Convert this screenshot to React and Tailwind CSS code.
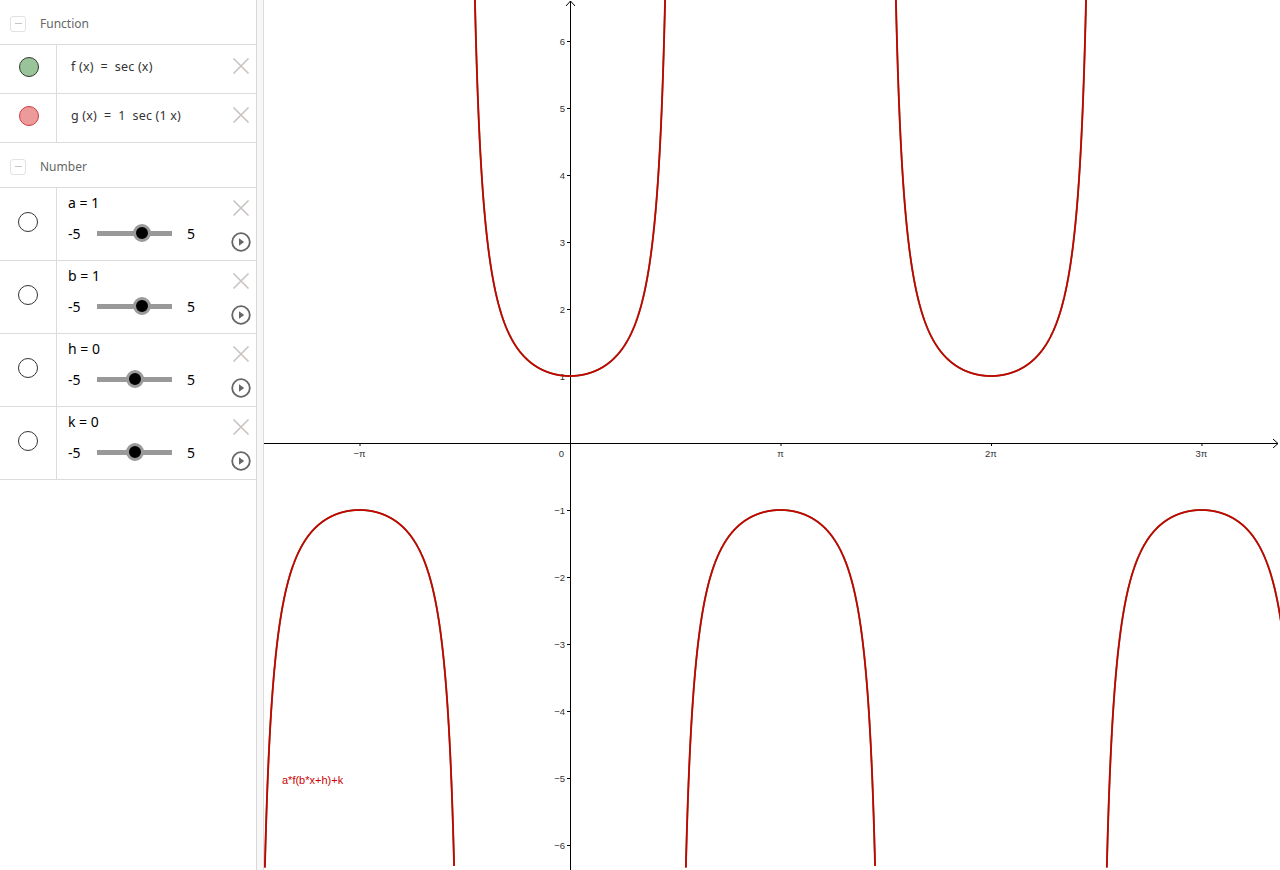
import React from 'react';

// GeoGebra-like view: algebra panel on the left, graphics view on the right.

const GRAPH_W = 1016;
const GRAPH_H = 870;
const OX = 306; // origin x inside graph
const OY = 443; // origin y inside graph
const S = 67; // px per unit

const sliders = [
  { name: 'a', value: 1 },
  { name: 'b', value: 1 },
  { name: 'h', value: 0 },
  { name: 'k', value: 0 },
];

function CollapseIcon() {
  return (
    <div className="w-[16px] h-[16px] rounded-[3px] border border-[#e2e2e2] flex items-center justify-center">
      <div className="w-[7px] h-[1.5px] bg-[#c4c4c4]" />
    </div>
  );
}

function CloseIcon() {
  return (
    <svg width="18" height="16" viewBox="0 0 18 16" aria-hidden="true">
      <path d="M1.5 0.5 L16.5 15.5 M16.5 0.5 L1.5 15.5" stroke="#c9c4bf" strokeWidth="1.6" fill="none" />
    </svg>
  );
}

function PlayIcon() {
  return (
    <svg width="20" height="20" viewBox="0 0 20 20" aria-hidden="true">
      <circle cx="10" cy="10" r="8.8" stroke="#666" strokeWidth="1.8" fill="none" />
      <path d="M8 6.3 L13.2 10 L8 13.7 Z" fill="#666" />
    </svg>
  );
}

function SectionHeader({ title }) {
  return (
    <div className="h-[45px] border-b border-[#dcdcdc] flex items-center pl-[10px] pt-[3px] gap-[14px]">
      <CollapseIcon />
      <span className="text-[12px] text-[#666]">{title}</span>
    </div>
  );
}

function FunctionRow({ fill, stroke, children }) {
  return (
    <div className="h-[49px] border-b border-[#dcdcdc] flex">
      <div className="w-[57px] border-r border-[#dcdcdc] flex items-center justify-center pl-[1px] pb-[4px]">
        <div className="w-[20px] h-[20px] rounded-full border" style={{ backgroundColor: fill, borderColor: stroke }} />
      </div>
      <div className="flex-1 flex items-center pl-[14px] pb-[3px] text-[12.5px] text-[#333] whitespace-pre tracking-[0.2px]">
        {children}
      </div>
      <div className="pt-[13px] pr-[6px]">
        <CloseIcon />
      </div>
    </div>
  );
}

function SliderRow({ name, value }) {
  const pos = ((value + 5) / 10) * 75;
  return (
    <div className="h-[73px] border-b border-[#dcdcdc] flex">
      <div className="w-[57px] border-r border-[#dcdcdc] flex items-center justify-center pb-[4px]">
        <div className="w-[20px] h-[20px] rounded-full border border-[#333] bg-white" />
      </div>
      <div className="flex-1 flex flex-col pl-[11px] pt-[5px] text-[14px] text-black">
        <span className="leading-[20px]">{name} = {value}</span>
        <div className="flex items-center h-[20px] mt-[10px]">
          <span className="w-[29px]">-5</span>
          <div className="relative w-[75px] h-[5px] bg-[#999]">
            <div
              className="absolute top-1/2 w-[18px] h-[18px] -ml-[9px] -mt-[9px] rounded-full bg-black border-[3px] border-[#9a9a9a]"
              style={{ left: pos }}
            />
          </div>
          <span className="ml-[15px]">5</span>
        </div>
      </div>
      <div className="flex flex-col items-center pr-[5px] pt-[12px] gap-[16px]">
        <CloseIcon />
        <PlayIcon />
      </div>
    </div>
  );
}

function buildBranches() {
  const paths = [];
  for (let k = -2; k <= 4; k++) {
    const c = k * Math.PI;
    let d = '';
    for (let x = c - Math.PI / 2 + 0.0005; x < c + Math.PI / 2; x += 0.002) {
      const y = 1 / Math.cos(x);
      const px = OX + x * S;
      const py = OY - y * S;
      if (px < -2 || px > GRAPH_W + 2) continue;
      if (py < -20 || py > GRAPH_H - 2) continue;
      d += (d ? ' L' : 'M') + px.toFixed(2) + ' ' + py.toFixed(2);
    }
    if (d) paths.push(d);
  }
  return paths;
}

const branches = buildBranches();

function Graph() {
  const yTicks = [6, 5, 4, 3, 2, 1, -1, -2, -3, -4, -5, -6];
  const xTicks = [
    { v: -1, label: '−π' },
    { v: 1, label: 'π' },
    { v: 2, label: '2π' },
    { v: 3, label: '3π' },
  ];
  return (
    <svg width={GRAPH_W} height={GRAPH_H} className="block" style={{ fontFamily: '"Liberation Sans", Arial, sans-serif' }}>
      {/* axes */}
      <line x1="0" y1={OY + 0.5} x2={GRAPH_W - 2} y2={OY + 0.5} stroke="#000" strokeWidth="1" />
      <path d={`M${GRAPH_W - 7} ${OY - 4} L${GRAPH_W - 2} ${OY + 0.5} L${GRAPH_W - 7} ${OY + 5}`} stroke="#000" fill="none" />
      <line x1={OX + 0.5} y1="1" x2={OX + 0.5} y2={GRAPH_H} stroke="#000" strokeWidth="1" />
      <path d={`M${OX - 4} 6 L${OX + 0.5} 1 L${OX + 5} 6`} stroke="#000" fill="none" />

      {yTicks.map((v) => {
        const y = OY - v * S;
        return (
          <g key={v}>
            <line x1={OX - 3} y1={y + 0.5} x2={OX} y2={y + 0.5} stroke="#000" />
            <text x={OX - 5} y={y + 3.5} fontSize="9.5" fill="#333" textAnchor="end">
              {v < 0 ? '−' + Math.abs(v) : v}
            </text>
          </g>
        );
      })}

      {xTicks.map((t) => {
        const x = OX + t.v * Math.PI * S;
        return (
          <g key={t.label}>
            <line x1={x + 0.5} y1={OY} x2={x + 0.5} y2={OY + 3} stroke="#000" />
            <text x={x} y={OY + 14} fontSize="9.5" fill="#333" textAnchor="middle">
              {t.label}
            </text>
          </g>
        );
      })}
      <text x={OX - 6} y={OY + 14} fontSize="9.5" fill="#333" textAnchor="end">0</text>

      {/* f underneath, g on top */}
      {branches.map((d, i) => (
        <path key={'f' + i} d={d} stroke="#7a5a2a" strokeWidth="1.9" fill="none" />
      ))}
      {branches.map((d, i) => (
        <path key={'g' + i} d={d} stroke="#c80000" strokeWidth="1.6" fill="none" />
      ))}

      <text x="18" y="784" fontSize="11" fill="#cc0000">a*f(b*x+h)+k</text>
    </svg>
  );
}

export default function App() {
  return (
    <div
      className="w-[1280px] h-[870px] flex overflow-hidden bg-white"
      style={{ fontFamily: '"Noto Sans", "Open Sans", sans-serif' }}
    >
      <aside className="w-[257px] shrink-0 border-r border-[#d8d8d8] bg-white">
        <SectionHeader title="Function" />
        <FunctionRow fill="#99c499" stroke="#2f3b2f">
          f (x)  =  sec (x)
        </FunctionRow>
        <FunctionRow fill="#ec9a9a" stroke="#d43a3a">
          g (x)  =  1  sec (1 x)
        </FunctionRow>
        <SectionHeader title="Number" />
        {sliders.map((s) => (
          <SliderRow key={s.name} {...s} />
        ))}
      </aside>
      <div className="w-[7px] shrink-0 bg-[#f7f7f7] border-r border-[#dcdcdc]" />
      <main className="flex-1 min-w-0">
        <Graph />
      </main>
    </div>
  );
}
